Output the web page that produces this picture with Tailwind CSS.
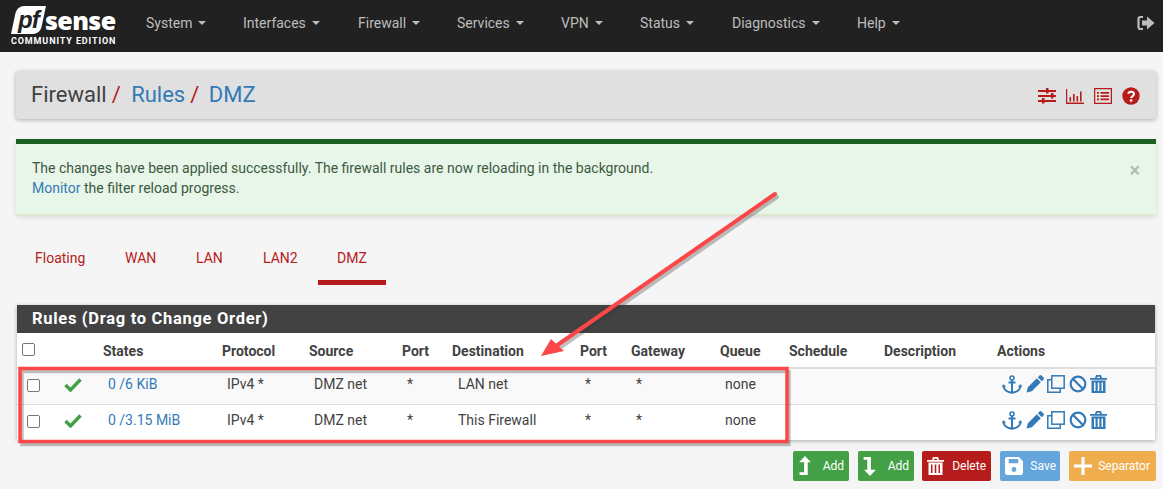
<!DOCTYPE html>
<html lang="en">
<head>
  <meta charset="UTF-8">
  <title>Firewall / Rules / DMZ</title>
  <script src="https://cdn.jsdelivr.net/npm/@tailwindcss/browser@4"></script>
</head>
<body class="relative w-[1163px] h-[489px] overflow-hidden bg-[#f5f5f5] font-['Roboto',sans-serif] text-[14px] text-[#424242]">

  <!-- top nav -->
  <nav class="h-[52px] bg-[#212121] flex items-center">
    <a class="w-[146px] shrink-0 pl-[11px] flex flex-col">
      <span class="flex items-center h-[28px]">
        <span class="w-[29px] h-[28px] bg-white -skew-x-[12deg] rounded-tl-[7px] rounded-br-[7px] flex items-center justify-center ml-[3px]">
          <span class="font-['Liberation_Sans',sans-serif] font-bold italic text-[24px] leading-none text-[#212121] tracking-[-1px] skew-x-[12deg]">pf</span>
        </span>
        <span class="font-['Open_Sans',sans-serif] font-extrabold text-[25px] leading-none text-white ml-[2px] tracking-[-0.6px]">sense</span>
      </span>
      <span class="font-['Roboto',sans-serif] font-bold text-[9px] leading-[10px] tracking-[0.88px] text-white mt-[2px] whitespace-nowrap">COMMUNITY EDITION</span>
    </a>
    <ul class="flex text-[#bdbdbd] text-[14px] items-center pb-[6px]">
      <li class="w-[97px] flex items-center">System<span class="ml-[6px] border-x-[4px] border-x-transparent border-t-[4px] border-t-[#bdbdbd]"></span></li>
      <li class="w-[115px] flex items-center">Interfaces<span class="ml-[6px] border-x-[4px] border-x-transparent border-t-[4px] border-t-[#bdbdbd]"></span></li>
      <li class="w-[99px] flex items-center">Firewall<span class="ml-[6px] border-x-[4px] border-x-transparent border-t-[4px] border-t-[#bdbdbd]"></span></li>
      <li class="w-[104px] flex items-center">Services<span class="ml-[6px] border-x-[4px] border-x-transparent border-t-[4px] border-t-[#bdbdbd]"></span></li>
      <li class="w-[79px] flex items-center">VPN<span class="ml-[6px] border-x-[4px] border-x-transparent border-t-[4px] border-t-[#bdbdbd]"></span></li>
      <li class="w-[92px] flex items-center">Status<span class="ml-[6px] border-x-[4px] border-x-transparent border-t-[4px] border-t-[#bdbdbd]"></span></li>
      <li class="w-[125px] flex items-center">Diagnostics<span class="ml-[6px] border-x-[4px] border-x-transparent border-t-[4px] border-t-[#bdbdbd]"></span></li>
      <li class="flex items-center">Help<span class="ml-[6px] border-x-[4px] border-x-transparent border-t-[4px] border-t-[#bdbdbd]"></span></li>
    </ul>
    <svg class="ml-auto mr-[8px] mb-[6px]" width="18" height="16" viewBox="0 0 18 16">
      <path d="M6 2H3.500A1.800 1.800 0 0 0 1.500 4v8a1.800 1.800 0 0 0 2 2H6" fill="none" stroke="#bdbdbd" stroke-width="2.200"/>
      <path d="M5 5.500h5V1.500L17.500 8 10 14.500v-4H5z" fill="#bdbdbd"/>
    </svg>
  </nav>

  <!-- breadcrumb -->
  <div class="mt-[19px] ml-[16px] mr-[7px] h-[48px] bg-[#e0e0e0] rounded-[3px] shadow-[0_1px_4px_rgba(0,0,0,0.3)] flex items-center pl-[15px] pr-[16px]">
    <h1 class="text-[22px] leading-none font-normal text-[#424242]">
      Firewall<span class="text-[#b71c1c] ml-[5px]">/</span>
      <span class="text-[#337ab7] ml-[5px]">Rules</span><span class="text-[#b71c1c] ml-[5px]">/</span>
      <span class="text-[#337ab7] ml-[4px]">DMZ</span>
    </h1>
    <div class="ml-auto flex items-center gap-[10px] mt-[2px]">
      <svg width="18" height="16" viewBox="0 0 18 16" fill="#b71c1c">
        <rect y="2" width="18" height="2"/><rect x="8" y="0" width="2.500" height="5.500"/>
        <rect y="7" width="18" height="2"/><rect x="13" y="5" width="2.500" height="5.500"/>
        <rect y="12" width="18" height="2"/><rect x="4" y="10" width="2.500" height="5.500"/>
      </svg>
      <svg width="18" height="15" viewBox="0 0 18 15" fill="#b71c1c">
        <path d="M0 0h1.200v13.600H18V15H0z"/><rect x="3.500" y="8" width="1.600" height="4.500"/><rect x="7" y="5" width="1.600" height="7.500"/><rect x="10.500" y="7" width="1.600" height="5.500"/><rect x="14" y="2.500" width="1.600" height="10"/>
      </svg>
      <svg width="18" height="16" viewBox="0 0 18 16">
        <rect x=".6" y=".6" width="16.800" height="14.800" fill="none" stroke="#b71c1c" stroke-width="1.300"/>
        <path d="M3 4h2v1.800H3zm0 3.200h2V9H3zm0 3.200h2v1.800H3zM6.500 4H15v1.800H6.500zm0 3.200H15V9H6.500zm0 3.200H15v1.800H6.500z" fill="#b71c1c"/>
      </svg>
      <svg width="18" height="18" viewBox="0 0 18 18">
        <circle cx="9" cy="9" r="8.700" fill="#b71c1c"/>
        <path d="M6.200 6.800A2.900 2.700 0 0 1 9 4.800c1.700 0 2.900 1 2.900 2.400 0 2.200-2.800 2-2.800 3.900" fill="none" stroke="#fff" stroke-width="2.100"/>
        <rect x="7.900" y="12.300" width="2.400" height="2.300" fill="#fff"/>
      </svg>
    </div>
  </div>

  <!-- alert -->
  <div class="relative mt-[20px] ml-[16px] mr-[7px] h-[76px] bg-[#e8f5e9] border-t-[5px] border-t-[#1b5e20] border-b border-b-[#dcedc8] shadow-[0_2px_5px_rgba(0,0,0,0.12)] pl-[16px] pt-[14px] leading-[20px] text-[14px] text-[#3c5a40]">
    <p>The changes have been applied successfully. The firewall rules are now reloading in the background.</p>
    <p><span class="text-[#337ab7]">Monitor</span> the filter reload progress.</p>
    <span class="absolute right-[16px] top-[16px] text-[#b3bdb4] text-[20px] leading-[20px] font-bold">×</span>
  </div>

  <!-- tabs -->
  <ul class="flex mt-[20px] ml-[17px] h-[50px] text-[14px] text-[#b71c1c]">
    <li class="pl-[18px] w-[90px] pt-[13px]">Floating</li>
    <li class="pl-[18px] w-[71px] pt-[13px]">WAN</li>
    <li class="pl-[18px] w-[67px] pt-[13px]">LAN</li>
    <li class="pl-[18px] w-[73px] pt-[13px]">LAN2</li>
    <li class="w-[68px] h-[50px] text-center pt-[13px] border-b-[5px] border-b-[#b71c1c]">DMZ</li>
  </ul>

  <!-- rules panel -->
  <section class="mt-[20px] ml-[17px] mr-[8px] bg-white shadow-[0_1px_4px_rgba(0,0,0,0.3)]">
    <h2 class="h-[28px] bg-[#424242] text-white font-bold text-[16.5px] leading-[28px] pl-[15px] tracking-[0.7px]">Rules (Drag to Change Order)</h2>
    <table class="w-full table-fixed text-left text-[14px] text-[#424242]">
      <colgroup>
        <col class="w-[37px]"><col class="w-[44px]"><col class="w-[119px]"><col class="w-[87px]"><col class="w-[93px]"><col class="w-[50px]"><col class="w-[128px]"><col class="w-[51px]"><col class="w-[89px]"><col class="w-[69px]"><col class="w-[95px]"><col class="w-[113px]"><col>
      </colgroup>
      <thead class="[&_th]:pt-[2px]">
        <tr class="h-[35px] border-b-2 border-b-[#dddddd]">
          <th class="pl-[5px] font-bold"><span class="block w-[13px] h-[13px] border border-[#767676] rounded-[2px] bg-white -mt-[4px]"></span></th>
          <th></th>
          <th class="pl-[5px]">States</th>
          <th class="pl-[5px]">Protocol</th>
          <th class="pl-[5px]">Source</th>
          <th class="pl-[5px]">Port</th>
          <th class="pl-[5px]">Destination</th>
          <th class="pl-[5px]">Port</th>
          <th class="pl-[5px]">Gateway</th>
          <th class="pl-[5px]">Queue</th>
          <th class="pl-[5px]">Schedule</th>
          <th class="pl-[5px]">Description</th>
          <th class="pl-[5px]">Actions</th>
        </tr>
      </thead>
      <tbody class="[&_td]:pb-[4px]">
        <tr class="h-[36px] bg-[#f9f9f9] border-b border-b-[#dddddd]">
          <td class="pl-[10px]"><span class="block w-[13px] h-[13px] border border-[#767676] rounded-[2px] bg-white translate-y-[1px]"></span></td>
          <td class="pl-[10px]"><svg width="18" height="15" viewBox="0 0 18 15"><path d="M1.500 8l5 5L16.500 2.500" fill="none" stroke="#43a047" stroke-width="3.400"/></svg></td>
          <td class="pl-[10px] text-[#337ab7]">0 /6 KiB</td>
          <td class="pl-[10px]">IPv4 *</td>
          <td class="pl-[10px]">DMZ net</td>
          <td class="pl-[10px]">*</td>
          <td class="pl-[11px]">LAN net</td>
          <td class="pl-[10px]">*</td>
          <td class="pl-[10px]">*</td>
          <td class="pl-[10px]">none</td>
          <td></td>
          <td></td>
          <td class="pl-[10px]">
            <div class="flex items-center gap-[3px]">
              <svg class="mr-[1px]" width="20" height="19" viewBox="0 0 20 19" fill="none" stroke="#337ab7"><circle cx="10" cy="3" r="2" stroke-width="1.600"/><path d="M10 5v13M6.500 7.500h7" stroke-width="2"/><path d="M1.500 10.500c0 4.500 4.500 6.800 8.500 7.200 4-.4 8.500-2.700 8.500-7.200" stroke-width="2"/><path d="M0 12l1.500-3 2.500 3z" fill="#337ab7" stroke="none"/><path d="M20 12l-1.500-3-2.500 3z" fill="#337ab7" stroke="none"/></svg>
              <svg width="18" height="18" viewBox="0 0 18 18" fill="#337ab7"><path d="M13.500.5a1.500 1.500 0 0 1 2 0l2 2a1.500 1.500 0 0 1 0 2L15.800 6.200 11.800 2.200zM10.800 3.200l4 4-9 9L.5 17.500l1.300-5.300z"/></svg>
              <svg class="mr-[1px]" width="18" height="18" viewBox="0 0 18 18" fill="none" stroke="#337ab7" stroke-width="1.500"><rect x="4.800" y=".8" width="12.400" height="12.400"/><path d="M4.800 4.800H.8v12.400h12.400v-4"/></svg>
              <svg width="18" height="18" viewBox="0 0 18 18" fill="none" stroke="#337ab7" stroke-width="2.200"><circle cx="9" cy="9" r="7.300"/><path d="M3.800 3.800l10.400 10.400"/></svg>
              <svg width="17" height="18" viewBox="0 0 17 18" fill="#337ab7"><path d="M0 3h17v1.800H0zM5 3l1-3h5l1 3h-1.800l-.5-1.300H7.300L6.800 3z"/><path d="M1.500 5.500h14V18h-14zM4 7.500v8.500h1.500V7.500zm3.700 0v8.500h1.600V7.500zm3.800 0v8.500H13V7.500z" fill-rule="evenodd"/></svg>
            </div>
          </td>
        </tr>
        <tr class="h-[36px] bg-white">
          <td class="pl-[10px]"><span class="block w-[13px] h-[13px] border border-[#767676] rounded-[2px] bg-white translate-y-[1px]"></span></td>
          <td class="pl-[10px]"><svg width="18" height="15" viewBox="0 0 18 15"><path d="M1.500 8l5 5L16.500 2.500" fill="none" stroke="#43a047" stroke-width="3.400"/></svg></td>
          <td class="pl-[10px] text-[#337ab7]">0 /3.15 MiB</td>
          <td class="pl-[10px]">IPv4 *</td>
          <td class="pl-[10px]">DMZ net</td>
          <td class="pl-[10px]">*</td>
          <td class="pl-[11px]">This Firewall</td>
          <td class="pl-[10px]">*</td>
          <td class="pl-[10px]">*</td>
          <td class="pl-[10px]">none</td>
          <td></td>
          <td></td>
          <td class="pl-[10px]">
            <div class="flex items-center gap-[3px]">
              <svg class="mr-[1px]" width="20" height="19" viewBox="0 0 20 19" fill="none" stroke="#337ab7"><circle cx="10" cy="3" r="2" stroke-width="1.600"/><path d="M10 5v13M6.500 7.500h7" stroke-width="2"/><path d="M1.500 10.500c0 4.500 4.500 6.800 8.500 7.200 4-.4 8.500-2.700 8.500-7.200" stroke-width="2"/><path d="M0 12l1.500-3 2.500 3z" fill="#337ab7" stroke="none"/><path d="M20 12l-1.500-3-2.500 3z" fill="#337ab7" stroke="none"/></svg>
              <svg width="18" height="18" viewBox="0 0 18 18" fill="#337ab7"><path d="M13.500.5a1.500 1.500 0 0 1 2 0l2 2a1.500 1.500 0 0 1 0 2L15.800 6.200 11.800 2.200zM10.800 3.200l4 4-9 9L.5 17.500l1.300-5.300z"/></svg>
              <svg class="mr-[1px]" width="18" height="18" viewBox="0 0 18 18" fill="none" stroke="#337ab7" stroke-width="1.500"><rect x="4.800" y=".8" width="12.400" height="12.400"/><path d="M4.800 4.800H.8v12.400h12.400v-4"/></svg>
              <svg width="18" height="18" viewBox="0 0 18 18" fill="none" stroke="#337ab7" stroke-width="2.200"><circle cx="9" cy="9" r="7.300"/><path d="M3.800 3.800l10.400 10.400"/></svg>
              <svg width="17" height="18" viewBox="0 0 17 18" fill="#337ab7"><path d="M0 3h17v1.800H0zM5 3l1-3h5l1 3h-1.800l-.5-1.300H7.300L6.800 3z"/><path d="M1.500 5.500h14V18h-14zM4 7.500v8.500h1.500V7.500zm3.700 0v8.500h1.600V7.500zm3.800 0v8.500H13V7.500z" fill-rule="evenodd"/></svg>
            </div>
          </td>
        </tr>
      </tbody>
    </table>
  </section>

  <!-- action buttons -->
  <div class="mt-[11px] mr-[7px] flex justify-end gap-[9px] text-[12px] text-white">
    <button class="w-[56px] h-[30px] bg-[#43a047] rounded-[2px] flex items-center justify-between pl-[5px] pr-[5px]">
      <svg width="14" height="20" viewBox="0 0 14 22" fill="#fff"><path d="M7 0l6.500 7H10v14H1v-3h5V7H.5z"/></svg><span>Add</span>
    </button>
    <button class="w-[56px] h-[30px] bg-[#43a047] rounded-[2px] flex items-center justify-between pl-[5px] pr-[5px]">
      <svg width="14" height="20" viewBox="0 0 14 22" fill="#fff"><path d="M7 22L.5 15H4V4H0V1h8v14h5.500z"/></svg><span>Add</span>
    </button>
    <button class="w-[69px] h-[30px] -ml-[1px] bg-[#b71c1c] rounded-[2px] flex items-center justify-between pl-[5px] pr-[5px]">
      <svg width="17" height="20" viewBox="0 0 17 18" fill="#fff"><path d="M0 3h17v1.800H0zM5 3l1-3h5l1 3h-1.800l-.5-1.300H7.300L6.800 3z"/><path d="M1.500 5.500h14V18h-14zM4 7.500v8.500h1.500V7.500zm3.700 0v8.500h1.600V7.500zm3.800 0v8.500H13V7.500z" fill-rule="evenodd"/></svg><span>Delete</span>
    </button>
    <button class="w-[60px] h-[30px] bg-[#64a6dc] rounded-[2px] flex items-center justify-between pl-[5px] pr-[4px]">
      <svg width="18" height="18" viewBox="0 0 17 17" fill="#fff"><path fill-rule="evenodd" d="M2 0h11l4 4v11a2 2 0 0 1-2 2H2a2 2 0 0 1-2-2V2a2 2 0 0 1 2-2zm1.500 2v4h9V2zM8.500 9.500a2.300 2.300 0 1 0 0 4.600 2.300 2.300 0 0 0 0-4.600z"/></svg><span>Save</span>
    </button>
    <button class="w-[87px] h-[30px] bg-[#f0ad4e] rounded-[2px] flex items-center justify-between pl-[5px] pr-[6px]">
      <svg width="18" height="18" viewBox="0 0 17 17" fill="#fff"><path d="M7 0h3v7h7v3h-7v7H7v-7H0V7h7z"/></svg><span>Separator</span>
    </button>
  </div>

  <!-- annotations drawn over the screenshot -->
  <svg class="absolute left-0 top-0 pointer-events-none" width="1163" height="489" viewBox="0 0 1163 489" fill="none">
    <g transform="translate(2 3)" opacity="0.3" stroke="#333">
      <rect x="20" y="368.500" width="767" height="73" stroke-width="3.500"/>
      <path d="M775 194L556 346" stroke-width="4" stroke-linecap="round"/>
    </g>
    <rect x="20" y="368.500" width="767" height="73" stroke="#fb4747" stroke-width="3.500"/>
    <path d="M775 194L556 346" stroke="#fb4747" stroke-width="4" stroke-linecap="round"/>
    <path d="M541 356L551 339L564 351z" fill="#fb4747"/>
  </svg>
</body>
</html>
